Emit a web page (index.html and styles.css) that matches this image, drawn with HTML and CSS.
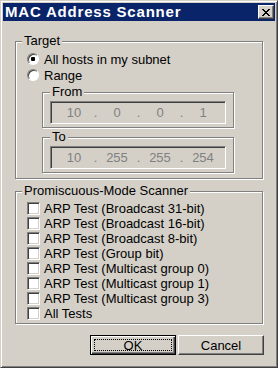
FILE: index.html
```html
<!DOCTYPE html>
<html lang="en">
<head>
    <meta charset="UTF-8">
    <title>MAC Address Scanner</title>
    <link rel="stylesheet" href="styles.css">
</head>
<body>
    <div class="window">
        <div class="titlebar">
            <span class="title">MAC Address Scanner</span>
            <span class="close-btn">
                <svg width="8" height="7" viewBox="0 0 8 7" shape-rendering="crispEdges">
                    <path d="M0 0h2v1H0zM6 0h2v1H6zM1 1h2v1H1zM5 1h2v1H5zM2 2h4v1H2zM3 3h2v1H3zM2 4h4v1H2zM1 5h2v1H1zM5 5h2v1H5zM0 6h2v1H0zM6 6h2v1H6z" fill="#000"/>
                </svg>
            </span>
        </div>

        <div class="client">
            <fieldset class="group">
                <legend>Target</legend>
                <div class="option"><span class="radio checked"></span>All hosts in my subnet</div>
                <div class="option"><span class="radio"></span>Range</div>

                <fieldset class="subgroup">
                    <legend>From</legend>
                    <div class="ip-box">
                        <span>10</span><span>.</span><span>0</span><span>.</span><span>0</span><span>.</span><span>1</span>
                    </div>
                </fieldset>

                <fieldset class="subgroup">
                    <legend>To</legend>
                    <div class="ip-box">
                        <span>10</span><span>.</span><span>255</span><span>.</span><span>255</span><span>.</span><span>254</span>
                    </div>
                </fieldset>
            </fieldset>

            <fieldset class="group promisc">
                <legend>Promiscuous-Mode Scanner</legend>
                <div class="check-row"><span class="checkbox"></span>ARP Test (Broadcast 31-bit)</div>
                <div class="check-row"><span class="checkbox"></span>ARP Test (Broadcast 16-bit)</div>
                <div class="check-row"><span class="checkbox"></span>ARP Test (Broadcast 8-bit)</div>
                <div class="check-row"><span class="checkbox"></span>ARP Test (Group bit)</div>
                <div class="check-row"><span class="checkbox"></span>ARP Test (Multicast group 0)</div>
                <div class="check-row"><span class="checkbox"></span>ARP Test (Multicast group 1)</div>
                <div class="check-row"><span class="checkbox"></span>ARP Test (Multicast group 3)</div>
                <div class="check-row"><span class="checkbox"></span>All Tests</div>
            </fieldset>

            <div class="buttons">
                <button class="btn default"><span class="focus">OK</span></button>
                <button class="btn">Cancel</button>
            </div>
        </div>
    </div>
</body>
</html>
```

FILE: styles.css
```css
body {
    margin: 0;
    background: #d4d0c8;
    font-family: "Liberation Sans", Arial, sans-serif;
    font-size: 13px;
    color: #000;
}

.window {
    width: 278px;
    height: 368px;
    box-sizing: border-box;
    padding: 2px;
    background: #d4d0c8;
    border: 1px solid;
    border-color: #d4d0c8 #404040 #404040 #d4d0c8;
    box-shadow: inset 1px 1px 0 #fff, inset -1px -1px 0 #808080;
}

/* title bar */
.titlebar {
    height: 18px;
    background: #0a246a;
    display: flex;
    align-items: center;
    justify-content: space-between;
    padding: 0 1px 0 2px;
}

.title {
    color: #fff;
    font-weight: bold;
    font-size: 15px;
    letter-spacing: 0.8px;
    line-height: 18px;
}

.close-btn {
    width: 16px;
    height: 14px;
    box-sizing: border-box;
    background: #d4d0c8;
    border: 1px solid;
    border-color: #fff #404040 #404040 #fff;
    box-shadow: inset -1px -1px 0 #808080;
    display: flex;
    align-items: center;
    justify-content: center;
}

.client {
    padding: 0 11px 0 12px;
}

/* group boxes */
fieldset {
    box-sizing: border-box;
    min-width: 0;
    border: 1px solid #808080;
    box-shadow: inset 1px 1px 0 #fff, 1px 1px 0 #fff;
}

legend {
    padding: 0 2px;
    line-height: 14px;
    background: #d4d0c8;
}

.group {
    width: 248px;
    margin: 13px 0 0;
    padding: 3px 11px 5px 11px;
}

.group > legend {
    margin-left: -5px;
}

.promisc {
    margin-top: 5px;
    padding-bottom: 2px;
}

.subgroup {
    width: 192px;
    margin: 2px 0 0 15px;
    padding: 2px 7px 3px 7px;
}

.option {
    display: flex;
    align-items: center;
    gap: 5px;
    height: 16px;
}

.radio {
    width: 12px;
    height: 12px;
    box-sizing: border-box;
    border-radius: 50%;
    border: 1px solid;
    border-color: #808080 #fff #fff #808080;
    box-shadow: inset 1px 1px 0 #404040;
    background: #fff;
}

.radio.checked {
    background: radial-gradient(circle, #000 0, #000 2px, #fff 2.5px);
}

.check-row {
    display: flex;
    align-items: center;
    gap: 4px;
    height: 15px;
}

.checkbox {
    width: 13px;
    height: 13px;
    box-sizing: border-box;
    border: 1px solid;
    border-color: #808080 #fff #fff #808080;
    box-shadow: inset 1px 1px 0 #404040, inset -1px -1px 0 #d4d0c8;
    background: #fff;
}

/* disabled ip address field */
.ip-box {
    width: 176px;
    height: 23px;
    box-sizing: border-box;
    border: 1px solid;
    border-color: #808080 #fff #fff #808080;
    box-shadow: inset 1px 1px 0 #404040, inset -1px -1px 0 #d4d0c8;
    padding-left: 5px;
    display: grid;
    grid-template-columns: 36px 7px 36px 7px 36px 7px 36px;
    align-items: center;
    text-align: center;
    color: #808080;
}

/* buttons */
.buttons {
    display: flex;
    justify-content: flex-end;
    gap: 2px;
    margin-top: 11px;
}

.btn {
    width: 86px;
    height: 20px;
    box-sizing: border-box;
    padding: 0;
    font-family: inherit;
    font-size: 13px;
    color: #000;
    background: #d4d0c8;
    border: 1px solid;
    border-color: #fff #404040 #404040 #fff;
    box-shadow: inset -1px -1px 0 #808080;
}

.btn.default {
    border-color: #000;
    padding: 3px;
    box-shadow: inset 1px 1px 0 #fff, inset -1px -1px 0 #404040, inset -2px -2px 0 #808080;
}

.focus {
    display: flex;
    align-items: center;
    justify-content: center;
    height: 100%;
    box-sizing: border-box;
    border: 1px dotted #000;
}
```
